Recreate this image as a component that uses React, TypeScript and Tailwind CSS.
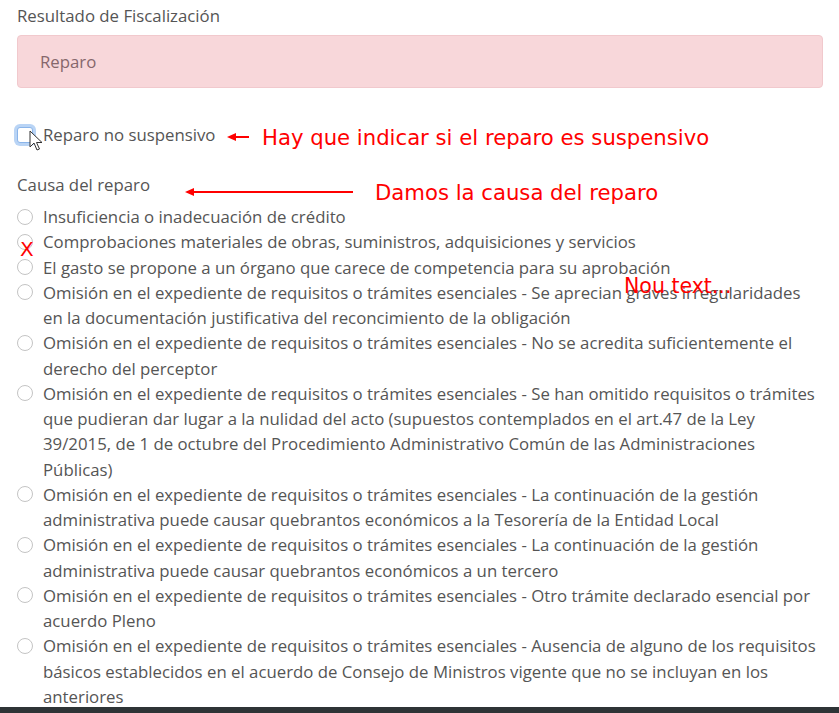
import React from 'react'

const causas: string[] = [
    'Insuficiencia o inadecuación de crédito',
    'Comprobaciones materiales de obras, suministros, adquisiciones y servicios',
    'El gasto se propone a un órgano que carece de competencia para su aprobación',
    'Omisión en el expediente de requisitos o trámites esenciales - Se aprecian graves irregularidades en la documentación justificativa del reconcimiento de la obligación',
    'Omisión en el expediente de requisitos o trámites esenciales - No se acredita suficientemente el derecho del perceptor',
    'Omisión en el expediente de requisitos o trámites esenciales - Se han omitido requisitos o trámites que pudieran dar lugar a la nulidad del acto (supuestos contemplados en el art.47 de la Ley 39/2015, de 1 de octubre del Procedimiento Administrativo Común de las Administraciones Públicas)',
    'Omisión en el expediente de requisitos o trámites esenciales - La continuación de la gestión administrativa puede causar quebrantos económicos a la Tesorería de la Entidad Local',
    'Omisión en el expediente de requisitos o trámites esenciales - La continuación de la gestión administrativa puede causar quebrantos económicos a un tercero',
    'Omisión en el expediente de requisitos o trámites esenciales - Otro trámite declarado esencial por acuerdo Pleno',
    'Omisión en el expediente de requisitos o trámites esenciales - Ausencia de alguno de los requisitos básicos establecidos en el acuerdo de Consejo de Ministros vigente que no se incluyan en los anteriores',
]

// red arrow pointing left, drawn over the screenshot
const Arrow = ({ width }: { width: number }) => (
    <svg width={width} height="10" viewBox={`0 0 ${width} 10`}>
        <line x1="6" y1="5" x2={width} y2="5" stroke="#ff0000" strokeWidth="2" />
        <polygon points="0,5 9,1 9,9" fill="#ff0000" />
    </svg>
)

const App = () => {
    return (
        <div className="relative w-[839px] h-[713px] overflow-hidden bg-white font-['Open_Sans',sans-serif] text-[16.8px] text-[#555]">
            <div className="pl-[17px] pr-[16px] pt-[4px]">
                <div className="leading-[24px]">Resultado de Fiscalización</div>
                <div className="mt-[7px] h-[53px] flex items-center pl-[22px] bg-[#f8d7da] border border-[#f1c9cd] rounded-[4px] text-[#86676c]">
                    Reparo
                </div>

                <label className="mt-[34px] flex items-center h-[25px]">
                    <span className="w-[16px] h-[16px] rounded-[3px] border border-[#8bb5ea] bg-white ring-[3px] ring-[#b9d4f5]" />
                    <span className="ml-[10px] leading-[25px]">Reparo no suspensivo</span>
                </label>

                <div className="mt-[25px] leading-[25px]">Causa del reparo</div>

                <div className="mt-[7px] flex flex-col">
                    {causas.map((c, i) => (
                        <label key={i} className="flex items-start">
                            <span className="mt-[4.5px] shrink-0 w-[16px] h-[16px] rounded-full border border-[#c4c4c4] bg-white" />
                            <span className="ml-[10px] leading-[25.25px] pr-[5px]">{c}</span>
                        </label>
                    ))}
                </div>
            </div>

            {/* annotations */}
            <div className="absolute left-[227px] top-[132px]"><Arrow width={22} /></div>
            <div className="absolute left-[262px] top-[126px] font-['DejaVu_Sans',sans-serif] text-[21.2px] leading-[24px] text-[#ff0000]">
                Hay que indicar si el reparo es suspensivo
            </div>
            <div className="absolute left-[185px] top-[187px]"><Arrow width={168} /></div>
            <div className="absolute left-[375px] top-[181px] font-['DejaVu_Sans',sans-serif] text-[21.2px] leading-[24px] text-[#ff0000]">
                Damos la causa del reparo
            </div>
            <div className="absolute left-[20px] top-[237px] font-['DejaVu_Sans',sans-serif] text-[20px] leading-[24px] text-[#ff0000]">
                X
            </div>
            <div className="absolute left-[624px] top-[274px] font-['DejaVu_Sans',sans-serif] text-[20.5px] leading-[24px] text-[#ff0000]">
                Nou text...
            </div>

            {/* mouse pointer */}
            <svg className="absolute left-[29px] top-[130px]" width="14" height="22" viewBox="0 0 14 22">
                <path d="M1 1 L1 17 L5 13 L8 20 L10.5 19 L7.5 12.5 L13 12.5 Z" fill="#fff" stroke="#333" strokeWidth="1" strokeLinejoin="round" />
            </svg>

            <div className="absolute left-0 right-0 bottom-0 h-[6px] bg-[#2e3436]" />
        </div>
    )
}

export default App
